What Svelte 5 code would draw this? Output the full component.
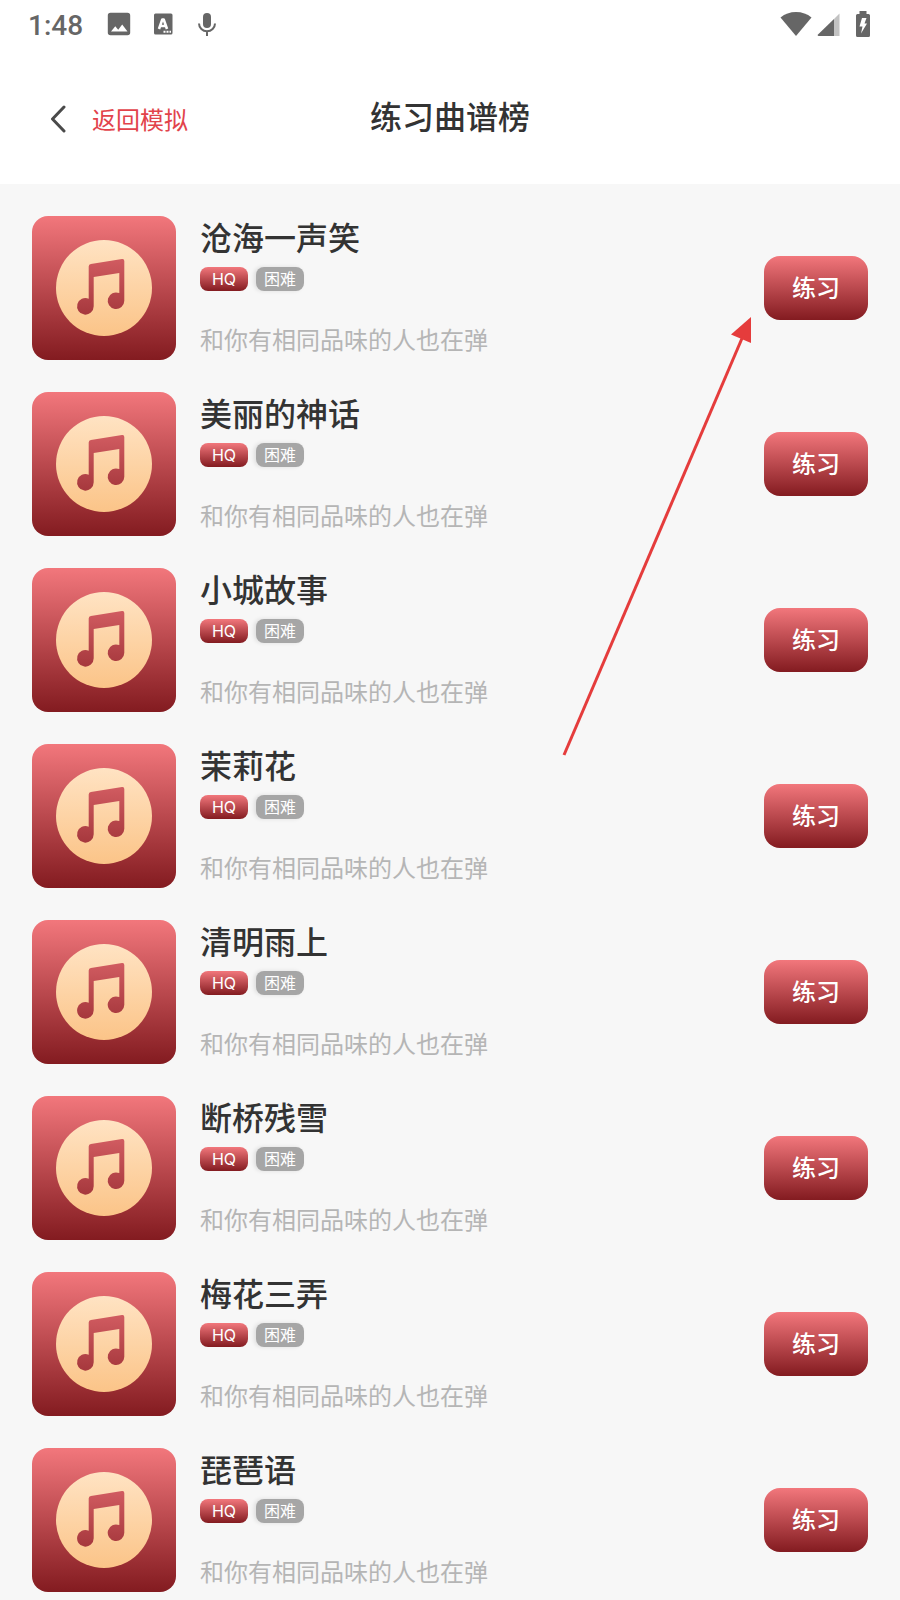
<script lang="ts">
	type Song = { id: number; title: string; quality: string; level: string };

	const titles = [
		'沧海一声笑',
		'美丽的神话',
		'小城故事',
		'茉莉花',
		'清明雨上',
		'断桥残雪',
		'梅花三弄',
		'琵琶语'
	];

	const songs: Song[] = titles.map((title, i) => ({
		id: i + 1,
		title,
		quality: 'HQ',
		level: '困难'
	}));

	let current = $state<number | null>(null);

	function practice(song: Song) {
		current = song.id;
	}
</script>

<div class="page">
	<div class="status-bar">
		<span class="clock">1:48</span>
		<div class="status-icons">
			<svg width="24" height="24" viewBox="0 0 24 24" aria-hidden="true">
				<path fill="#666" fill-rule="evenodd" d="M3.5 .8h17a2.7 2.7 0 0 1 2.7 2.7v17a2.7 2.7 0 0 1-2.7 2.7h-17a2.7 2.7 0 0 1-2.7-2.7v-17a2.7 2.7 0 0 1 2.7-2.7zM4 19.5h16.500l-5.300-7-4 5.200-2.900-3.500z" />
			</svg>
			<svg width="24" height="24" viewBox="0 0 24 24" aria-hidden="true">
				<rect x="3" y="1.500" width="18.500" height="21" rx="1.500" fill="#666" />
				<path fill="none" stroke="#fff" stroke-width="2.600" stroke-linejoin="round" d="M8 17l3.300-9.500h1.400L16 17M9.300 14h5.400" />
				<path fill="#fff" d="M12.500 18.800h2v2h-2zM15.500 18.800h2v2h-2zM18.500 18.800h1.500v2h-1.500z" />
			</svg>
			<svg width="24" height="24" viewBox="0 0 24 24" aria-hidden="true">
				<rect x="8" y="1" width="8" height="15" rx="4" fill="#666" />
				<path fill="none" stroke="#666" stroke-width="2" d="M4 11.500a8 7.700 0 0 0 16 0M12 19v5.500" />
			</svg>
		</div>
		<div class="system-icons">
			<svg width="32" height="26" viewBox="0 0 32 26" aria-hidden="true">
				<path fill="#666" d="M16 25L.5 6.500Q7 1 16 1t15.500 5.500z" />
			</svg>
			<svg width="24" height="26" viewBox="0 0 24 26" aria-hidden="true">
				<path fill="#c2c2c2" d="M17 8l5.500-5.500v22.500H17z" />
				<path fill="#666" d="M17 8v17H1.500q-1.500-.5-.5-1.500z" />
			</svg>
			<svg width="14" height="26" viewBox="0 0 14 26" aria-hidden="true">
				<path fill="#666" d="M3.500 0h7v3h2q1.500 0 1.500 1.500v20q0 1.500-1.500 1.500h-11Q0 26 0 24.500v-20Q0 3 1.500 3h2z" />
				<path fill="#fff" d="M6 7h4.500l-2 5.500H11L5 22.500l1.500-7H3.500z" />
			</svg>
		</div>
	</div>

	<header class="nav">
		<a class="back" href="#back">
			<svg width="16" height="28" viewBox="0 0 16 28" aria-hidden="true">
				<path d="M14 2L2.500 14 14 26" fill="none" stroke="#4a4a4a" stroke-width="3" stroke-linecap="round" stroke-linejoin="round" />
			</svg>
			<span>返回模拟</span>
		</a>
		<h1>练习曲谱榜</h1>
	</header>

	<main>
		<ul class="songs">
			{#each songs as song (song.id)}
				<li class="song">
					<svg class="cover" viewBox="0 0 144 144" aria-hidden="true">
						<defs>
							<linearGradient id="red-{song.id}" gradientUnits="userSpaceOnUse" x1="0" y1="0" x2="0" y2="144">
								<stop offset="0" stop-color="#f2777c" />
								<stop offset="1" stop-color="#831b20" />
							</linearGradient>
							<linearGradient id="gold-{song.id}" x1="0" y1="0" x2="0" y2="1">
								<stop offset="0" stop-color="#ffe3c3" />
								<stop offset="1" stop-color="#fbc488" />
							</linearGradient>
						</defs>
						<rect width="144" height="144" rx="16" fill="url(#red-{song.id})" />
						<circle cx="72" cy="72" r="48" fill="url(#gold-{song.id})" />
						<path
							fill="url(#red-{song.id})"
							d="M56.700 50.500Q56.700 48.300 58.900 47.900L90 43.100Q92.300 42.800 92.300 45V84.700A8.300 8.300 0 1 1 87.300 77.100V57L61.700 61V90.300A8.300 8.300 0 1 1 56.700 82.700z"
						/>
					</svg>
					<div class="info">
						<h2>{song.title}</h2>
						<div class="tags">
							<span class="tag hq">{song.quality}</span>
							<span class="tag level">{song.level}</span>
						</div>
						<p>和你有相同品味的人也在弹</p>
					</div>
					<button
						type="button"
						aria-pressed={current === song.id}
						onclick={() => practice(song)}
					>
						练习
					</button>
				</li>
			{/each}
		</ul>

		<svg class="pointer" width="192" height="442" viewBox="0 0 192 442" aria-hidden="true">
			<path d="M4 439L183 20" fill="none" stroke="#e53c3c" stroke-width="3" />
			<path d="M191 1L171 18.500 191 27z" fill="#e53c3c" />
		</svg>
	</main>
</div>

<style>
	:global(body) {
		margin: 0;
		background: #f7f7f7;
	}

	.page {
		font-family: 'Noto Sans CJK SC', sans-serif;
		color: #333;
	}

	.status-bar {
		display: flex;
		align-items: center;
		height: 48px;
		padding: 0 30px 0 28px;
		background: #fff;
	}

	.clock {
		padding-top: 4px;
		font-family: Roboto, sans-serif;
		font-size: 28px;
		font-weight: 500;
		line-height: 44px;
		color: #666;
	}

	.status-icons {
		display: flex;
		gap: 20px;
		margin-left: 24px;
	}

	.system-icons {
		display: flex;
		gap: 5px;
		margin-left: auto;
	}

	.system-icons svg:last-child {
		margin-left: 10px;
	}

	.nav {
		display: grid;
		grid-template-columns: 1fr auto 1fr;
		align-items: center;
		box-sizing: border-box;
		height: 136px;
		padding: 8px 50px 10px;
		background: #fff;
	}

	.back {
		display: flex;
		align-items: center;
		gap: 26px;
		padding-top: 8px;
		font-size: 24px;
		line-height: 32px;
		color: #e2434b;
		text-decoration: none;
	}

	h1 {
		margin: 0;
		font-size: 32px;
		font-weight: 500;
		line-height: 48px;
	}

	main {
		position: relative;
	}

	.songs {
		display: flex;
		flex-direction: column;
		gap: 32px;
		margin: 0;
		padding: 32px 32px 8px;
		list-style: none;
	}

	.song {
		display: flex;
		align-items: center;
		gap: 24px;
	}

	.cover {
		flex: none;
		width: 144px;
		height: 144px;
	}

	.info {
		flex: 1;
		align-self: flex-start;
		min-width: 0;
	}

	h2 {
		margin: 0 0 11px;
		font-size: 32px;
		font-weight: 500;
		line-height: 40px;
	}

	.tags {
		display: flex;
		gap: 8px;
		margin-bottom: 32px;
	}

	.tag {
		box-sizing: border-box;
		width: 48px;
		height: 24px;
		border-radius: 8px;
		font-size: 16px;
		line-height: 24px;
		text-align: center;
		color: #fff;
	}

	.hq {
		font-family: Inter, sans-serif;
		background: linear-gradient(#f2777c, #831b20);
	}

	.level {
		line-height: 22px;
		background: #a6a6a6;
		box-shadow: -2px 0 4px rgba(0, 0, 0, 0.1);
	}

	p {
		margin: 0;
		font-size: 24px;
		line-height: 32px;
		color: #b5b5b5;
	}

	button {
		flex: none;
		width: 104px;
		height: 64px;
		padding: 0 0 4px;
		border: none;
		border-radius: 16px;
		font-family: inherit;
		font-size: 24px;
		font-weight: 500;
		color: #fff;
		background: linear-gradient(#f2777c, #831b20);
		cursor: pointer;
	}

	.pointer {
		position: absolute;
		top: 132px;
		right: 148px;
		pointer-events: none;
	}
</style>
